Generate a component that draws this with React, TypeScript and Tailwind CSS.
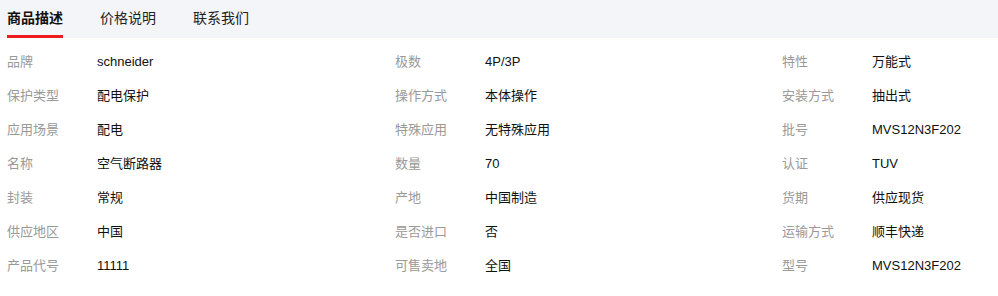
import { useState } from "react";

type Spec = { label: string; value: string };

const tabs = ["商品描述", "价格说明", "联系我们"];

// three columns of specs, read row by row
const specs: Spec[][] = [
  [
    { label: "品牌", value: "schneider" },
    { label: "极数", value: "4P/3P" },
    { label: "特性", value: "万能式" },
  ],
  [
    { label: "保护类型", value: "配电保护" },
    { label: "操作方式", value: "本体操作" },
    { label: "安装方式", value: "抽出式" },
  ],
  [
    { label: "应用场景", value: "配电" },
    { label: "特殊应用", value: "无特殊应用" },
    { label: "批号", value: "MVS12N3F202" },
  ],
  [
    { label: "名称", value: "空气断路器" },
    { label: "数量", value: "70" },
    { label: "认证", value: "TUV" },
  ],
  [
    { label: "封装", value: "常规" },
    { label: "产地", value: "中国制造" },
    { label: "货期", value: "供应现货" },
  ],
  [
    { label: "供应地区", value: "中国" },
    { label: "是否进口", value: "否" },
    { label: "运输方式", value: "顺丰快递" },
  ],
  [
    { label: "产品代号", value: "11111" },
    { label: "可售卖地", value: "全国" },
    { label: "型号", value: "MVS12N3F202" },
  ],
];

export default function App() {
  const [active, setActive] = useState(0);

  return (
    <div
      className="w-[998px] h-[296px] bg-white overflow-hidden"
      style={{ fontFamily: '"Liberation Sans", Arial, "Noto Sans CJK SC", sans-serif' }}
    >
      {/* tab bar */}
      <div className="h-[38px] bg-[#f4f5f8] flex items-stretch pl-[7px] gap-[37px]">
        {tabs.map((tab, i) => (
          <button
            key={tab}
            onClick={() => setActive(i)}
            className={`relative text-[14px] leading-none pb-[2px] ${
              i === active ? "font-bold text-[#111]" : "text-[#222]"
            }`}
          >
            {tab}
            {i === active && (
              <span className="absolute left-0 right-0 bottom-0 h-[3px] bg-[#ee1c1c]" />
            )}
          </button>
        ))}
      </div>

      {/* spec table */}
      <div className="pt-[7px]">
        {specs.map((row, r) => (
          <div key={r} className="grid grid-cols-[388px_387px_1fr] h-[34px] items-center pl-[7px]">
            {row.map((s) => (
              <div key={s.label} className="flex items-center text-[13px]">
                <span className="w-[90px] text-[#999]">{s.label}</span>
                <span className="text-[#111]">{s.value}</span>
              </div>
            ))}
          </div>
        ))}
      </div>
    </div>
  );
}
